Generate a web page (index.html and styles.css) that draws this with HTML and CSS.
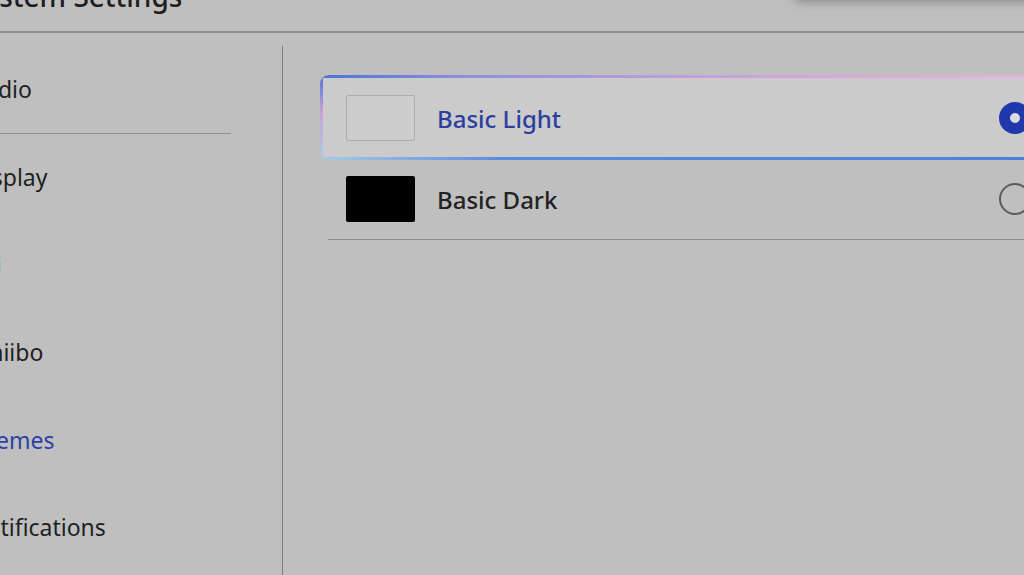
FILE: index.html
```html
<!DOCTYPE html>
<html lang="en">
<head>
    <meta charset="UTF-8">
    <meta name="viewport" content="width=device-width, initial-scale=1.0">
    <title>System Settings - Themes</title>
    <link rel="stylesheet" href="styles.css">
</head>
<body>
    <div class="popup-edge"></div>
    <div class="screen">
        <header class="header">
            <h1 class="title">System Settings</h1>
        </header>
        <div class="layout">
            <nav class="sidebar">
                <ul class="nav">
                    <li class="nav-item group-end">Audio</li>
                    <li class="nav-item">Display</li>
                    <li class="nav-item">Mii</li>
                    <li class="nav-item">amiibo</li>
                    <li class="nav-item active">Themes</li>
                    <li class="nav-item">Notifications</li>
                    <li class="nav-item">Sleep Mode</li>
                </ul>
            </nav>
            <main class="content">
                <ul class="theme-list">
                    <li class="theme-row selected">
                        <span class="swatch swatch-light"></span>
                        <span class="theme-name">Basic Light</span>
                        <span class="radio checked"></span>
                    </li>
                    <li class="theme-row">
                        <span class="swatch swatch-dark"></span>
                        <span class="theme-name">Basic Dark</span>
                        <span class="radio"></span>
                    </li>
                </ul>
            </main>
        </div>
    </div>
</body>
</html>
```

FILE: styles.css
```css
html, body {
    margin: 0;
    height: 100%;
    overflow: hidden;
}
body {
    background-color: #bfbfbf;
    font-family: "Noto Sans", "Open Sans", sans-serif;
    color: #202020;
    position: relative;
}
.screen {
    width: 1100px;
}
.header {
    height: 31px;
    border-bottom: 2px solid #8c8c8c;
    overflow: hidden;
}
.title {
    margin: -18px 0 0 -31px;
    font-size: 28px;
    font-weight: 500;
    line-height: 28px;
    color: #1e1e1e;
}
/* shadow under the dialog that sits above the view */
.popup-edge {
    position: absolute;
    top: -40px;
    left: 795px;
    width: 400px;
    height: 38px;
    background-color: #bcbcbc;
    box-shadow: 0 3px 10px rgba(0, 0, 0, 0.32);
}
.layout {
    display: flex;
    margin-top: 13px;
    height: 560px;
}
.sidebar {
    width: 282px;
    flex-shrink: 0;
    border-right: 1.5px solid #7d7d7d;
}
.nav {
    list-style: none;
    margin: 0 0 0 -31px;
    padding: 0;
    width: 262px;
}
.nav-item {
    box-sizing: border-box;
    height: 87.5px;
    display: flex;
    align-items: center;
    font-size: 23px;
    color: #1f1f1f;
}
.nav-item.group-end {
    border-bottom: 1.5px solid #8e8e8e;
}
.nav-item.active {
    color: #2f3fa6;
}
.content {
    padding: 32px 0 0 45px;
}
.theme-list {
    list-style: none;
    margin: 0;
    padding: 0;
    width: 713px;
}
.theme-row {
    position: relative;
    isolation: isolate;
    box-sizing: border-box;
    height: 81px;
    display: flex;
    align-items: center;
    padding: 0 10px 0 18px;
    border-bottom: 1.5px solid #8a8a8a;
}
.theme-row.selected {
    border-bottom-color: transparent;
}
.theme-row.selected::before {
    content: "";
    position: absolute;
    top: -3px;
    bottom: -2px;
    left: -8px;
    right: -20px;
    z-index: -1;
    border-radius: 9px;
    background:
        linear-gradient(90deg, #4d73d8, #8f8fdc 20%, #cfa5da 60%, #e4b8d8) top / 100% 3px no-repeat,
        linear-gradient(90deg, #a6cae6, #5a8ade 25%, #4a7fdc) bottom / 100% 3px no-repeat,
        linear-gradient(#4d70d8, #c9a3d9 45%, #a9cde6) left / 3px 100% no-repeat,
        #c9c9c9;
}
.theme-row.selected::after {
    content: "";
    position: absolute;
    top: 0;
    bottom: 1px;
    left: -5px;
    right: -17px;
    z-index: -1;
    border-radius: 6px;
    background-color: #cbcbcb;
}
.swatch {
    box-sizing: border-box;
    width: 69px;
    height: 46px;
    border-radius: 2px;
    flex-shrink: 0;
}
.swatch-light {
    background-color: #cdcdcd;
    border: 1px solid #acacac;
}
.swatch-dark {
    background-color: #000;
}
.theme-name {
    margin-left: 22px;
    font-size: 24px;
    font-weight: 500;
    color: #222;
}
.selected .theme-name {
    color: #2d3e9f;
}
.radio {
    box-sizing: border-box;
    margin-left: auto;
    width: 32px;
    height: 32px;
    border-radius: 50%;
    border: 2px solid #5c5c5c;
}
.radio.checked {
    border: 11px solid #2138ad;
    background-color: #dcdcdc;
}
```
